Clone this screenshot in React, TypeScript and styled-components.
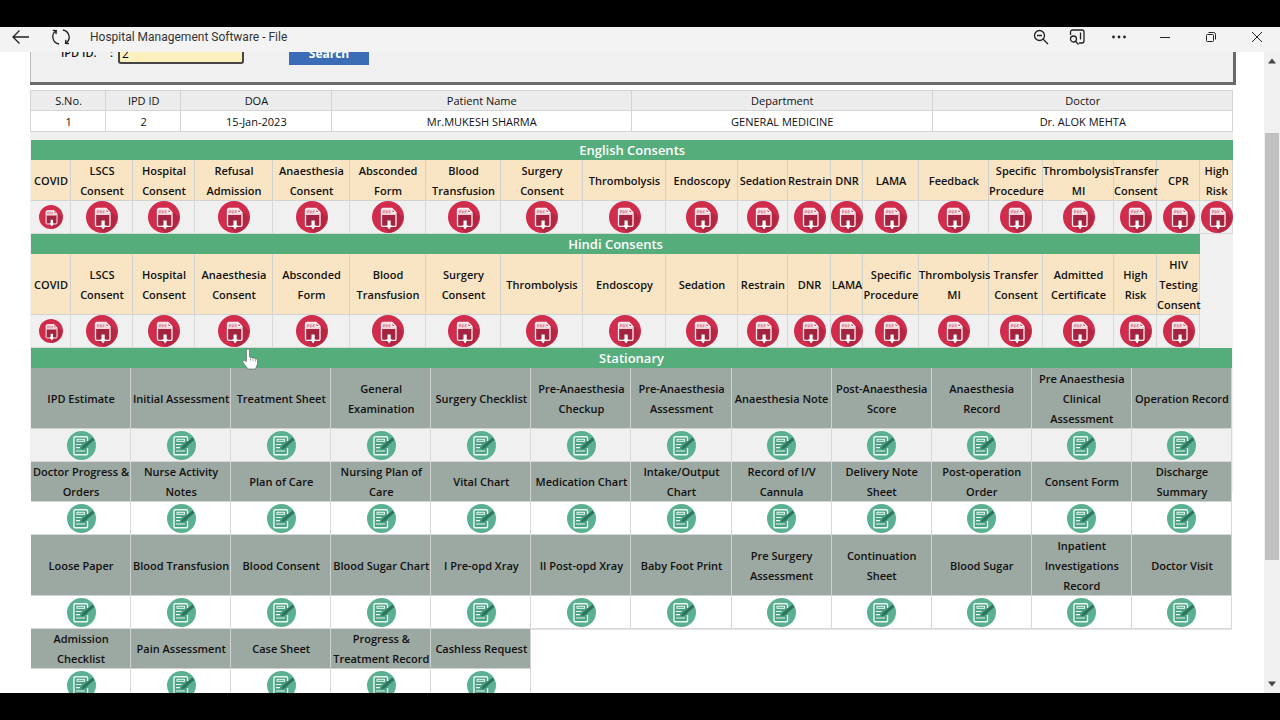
import React from "react";
import styled, { createGlobalStyle, css } from "styled-components";

const Global = createGlobalStyle`
  * { box-sizing: border-box; }
  html, body { margin: 0; background: #000; }
  body { font-family: "Open Sans", "Liberation Sans", sans-serif; color: #111; }
`;

const Screen = styled.div`
  display: flex;
  flex-direction: column;
  height: 100vh;
  padding: 27px 0;
  background: #000;
`;

const TitleBar = styled.header`
  display: flex;
  align-items: center;
  justify-content: space-between;
  flex: none;
  height: 25px;
  padding: 0 15px 6px 10px;
  background: #f3f3f3;
`;

const TitleGroup = styled.div<{ $gap: number }>`
  display: flex;
  align-items: center;
  gap: ${(p) => p.$gap}px;
`;

const WindowTitle = styled.h1`
  margin: 0;
  font: 400 12px/16px Roboto, sans-serif;
  color: #333;
`;

const IconButton = styled.button`
  display: flex;
  padding: 0;
  border: 0;
  background: none;
  color: #222;
`;

const Body = styled.div`
  display: flex;
  flex: 1;
  min-height: 0;
  overflow: hidden;
  background: #fff;
`;

const Page = styled.main`
  flex: 1;
  min-width: 0;
  padding: 0 31px 0 30px;
`;

const Scrolled = styled.div`
  margin-top: -24px;
`;

const SearchPanel = styled.form`
  display: flex;
  align-items: flex-start;
  height: 57px;
  margin-right: -3px;
  padding: 15px 0 0 31px;
  background: #f0f0f0;
  border: solid #6a6a6a;
  border-width: 0 3px 3px 0;
  box-shadow: inset 1px 0 0 #bbb;
`;

const FieldLabel = styled.label`
  display: flex;
  justify-content: space-between;
  width: 52px;
  margin-right: 5px;
  font-size: 11px;
  font-weight: 600;
  line-height: 20px;
`;

const TextBox = styled.input`
  width: 126px;
  height: 21px;
  margin-right: 45px;
  padding: 0 2px;
  border: 2px solid #444;
  border-radius: 3px;
  background: #fdf0bf;
  font: 12px "Open Sans", sans-serif;
`;

const SearchButton = styled.button`
  width: 80px;
  height: 22px;
  padding: 0;
  border: 0;
  background: #3a6db5;
  color: #fff;
  font: 700 12px/20px "Open Sans", sans-serif;
`;

const Records = styled.div`
  margin-top: 5px;
`;

const InfoTable = styled.table`
  width: 100%;
  table-layout: fixed;
  border-collapse: separate;
  border-spacing: 0;
  border: 1px solid #d4d4d4;
  border-width: 1px 0 0 1px;
  font-size: 11px;
  line-height: 20px;
  text-align: center;
`;

const infoCell = css`
  padding: 0;
  box-shadow: inset -1px -1px 0 #d4d4d4;
`;

const InfoHead = styled.th`
  ${infoCell}
  height: 20px;
  background: #ececec;
  font-weight: 400;
`;

const InfoCell = styled.td`
  ${infoCell}
  height: 21px;
  background: #fff;
`;

const Sections = styled.div`
  padding: 8px 1px 0;
  background: linear-gradient(#f0f0f0, #f0f0f0) no-repeat 0 0 / 100% 360px;
`;

const GridTable = styled.table`
  width: 100%;
  table-layout: fixed;
  border-collapse: separate;
  border-spacing: 0;
  font-size: 11px;
  line-height: 20px;
  text-align: center;
`;

const Banner = styled.th`
  height: 20px;
  padding: 0;
  background: #56ad7c;
  color: #fff;
  font-size: 13px;
  font-weight: 600;
`;

const LabelCell = styled.th<{ $tone: string; $height: number }>`
  height: ${(p) => p.$height}px;
  padding: 0;
  background: ${(p) => p.$tone};
  box-shadow: inset -1px -1px 0 #d0d3cf;
  font-weight: 600;
`;

const IconCell = styled.td<{ $tone: string }>`
  height: 33px;
  padding: 0 0 1px;
  background: ${(p) => p.$tone};
  box-shadow: inset -1px -1px 0 #d8d8d8;
  vertical-align: middle;
`;

const BlankCell = styled.td<{ $tone: string; $line?: boolean }>`
  padding: 0;
  background: ${(p) => p.$tone};
  ${(p) => p.$line && "box-shadow: inset 0 1px 0 #e4e4e4;"}
`;

const FileLink = styled.a`
  display: flex;
  justify-content: center;
`;

const ScrollBar = styled.div`
  display: flex;
  flex-direction: column;
  align-items: center;
  flex: none;
  width: 16px;
  padding: 6px 1px;
  background: #f0f0f0;
`;

const Track = styled.div`
  flex: 1;
  width: 14px;
  margin: 4px 0;
  padding: 65px 0 117px;
`;

const Thumb = styled.div`
  height: 100%;
  background: #c1c1c1;
`;

const Pointer = styled.svg`
  position: absolute;
  left: 242px;
  top: 348px;
`;

function PdfIcon({ size = 32 }: { size?: number }) {
  return (
    <svg width={size} height={size} viewBox="0 0 32 32" aria-hidden="true">
      <circle cx="16" cy="16" r="16" fill="#d02c4c" />
      <path d="M24 9.500L30.800 16A16 16 0 0 1 18 31.800L10 24.500Z" fill="#b42743" />
      <rect x="9.500" y="14" width="14" height="10.500" fill="#a32440" />
      <path d="M10.500 7.500H20l3.500 3.500v3H9.500V8.500Z" fill="#f4d5db" />
      <path d="M20 7v4.500h4" fill="#d02c4c" stroke="#fff" strokeWidth="1" />
      <path d="M9.500 9a1.500 1.500 0 0 1 1.500-1.500h9l4 4v12.500a1.300 1.300 0 0 1-1.300 1.300H10.800A1.300 1.300 0 0 1 9.500 24Z" fill="none" stroke="#fceef0" strokeWidth="1.300" />
      <path d="M11.500 12.200V9.800h1.500v1.200h-1.500M14.300 9.800v2.200h.8l.7-.6v-1l-.7-.6ZM17.200 12.200V9.800h1.500M17.200 11h1.200" stroke="#c9687b" strokeWidth=".6" fill="none" />
      <path d="M15.500 19.500h3.200v5h1.300L17.100 28.500l-2.900-4h1.300Z" fill="#fff" />
    </svg>
  );
}

function NoteIcon() {
  return (
    <svg width="29" height="29" viewBox="0 0 29 29" aria-hidden="true">
      <circle cx="14.500" cy="14.500" r="14.500" fill="#5bb091" />
      <path d="M20.500 10V7A1.300 1.300 0 0 0 19.200 5.700H8.300A1.300 1.300 0 0 0 7 7v15.500a1.300 1.300 0 0 0 1.300 1.300h10.900a1.300 1.300 0 0 0 1.300-1.300V17" fill="#4aa183" stroke="#e9fbf3" strokeWidth="1.400" />
      <rect x="10" y="8.300" width="7.500" height="2" fill="none" stroke="#e9fbf3" strokeWidth="1" />
      <path d="M9 13.500h5.500M9 16.700h4M9 20h9" stroke="#e9fbf3" strokeWidth="1.200" />
      <path d="M25.500 6.500L15.500 15l-1.500 3.500 3.700-1.200L27.300 9Z" fill="#2f735e" />
    </svg>
  );
}

const columns = [40, 62, 62, 78, 77, 76, 75, 82, 83, 72, 50, 43, 32, 56, 70, 54, 71, 43, 43, 33];

const english = ["COVID", "LSCS Consent", "Hospital Consent", "Refusal Admission", "Anaesthesia Consent", "Absconded Form", "Blood Transfusion", "Surgery Consent", "Thrombolysis", "Endoscopy", "Sedation", "Restrain", "DNR", "LAMA", "Feedback", "Specific Procedure", "Thrombolysis MI", "Transfer Consent", "CPR", "High Risk"];

const hindi = ["COVID", "LSCS Consent", "Hospital Consent", "Anaesthesia Consent", "Absconded Form", "Blood Transfusion", "Surgery Consent", "Thrombolysis", "Endoscopy", "Sedation", "Restrain", "DNR", "LAMA", "Specific Procedure", "Thrombolysis MI", "Transfer Consent", "Admitted Certificate", "High Risk", "HIV Testing Consent"];

const stationary = [
  { height: 61, tone: "#f0f0f0", items: ["IPD Estimate", "Initial Assessment", "Treatment Sheet", "General Examination", "Surgery Checklist", "Pre-Anaesthesia Checkup", "Pre-Anaesthesia Assessment", "Anaesthesia Note", "Post-Anaesthesia Score", "Anaesthesia Record", "Pre Anaesthesia Clinical Assessment", "Operation Record"] },
  { height: 40, tone: "#fff", items: ["Doctor Progress & Orders", "Nurse Activity Notes", "Plan of Care", "Nursing Plan of Care", "Vital Chart", "Medication Chart", "Intake/Output Chart", "Record of I/V Cannula", "Delivery Note Sheet", "Post-operation Order", "Consent Form", "Discharge Summary"] },
  { height: 61, tone: "#fff", items: ["Loose Paper", "Blood Transfusion", "Blood Consent", "Blood Sugar Chart", "I Pre-opd Xray", "II Post-opd Xray", "Baby Foot Print", "Pre Surgery Assessment", "Continuation Sheet", "Blood Sugar", "Inpatient Investigations Record", "Doctor Visit"] },
  { height: 40, tone: "#fff", items: ["Admission Checklist", "Pain Assessment", "Case Sheet", "Progress & Treatment Record", "Cashless Request"] },
];

// Consent labels break after every word, so each word sits on its own line.
function Stacked({ text }: { text: string }) {
  return (
    <>
      {text.split(" ").map((word, i) => (
        <React.Fragment key={i}>
          {i > 0 && <br />}
          {word}
        </React.Fragment>
      ))}
    </>
  );
}

function ConsentTable({ title, items, height }: { title: string; items: string[]; height: number }) {
  const rest = columns.length - items.length;
  return (
    <GridTable>
      <colgroup>{columns.map((w, i) => <col key={i} width={w} />)}</colgroup>
      <tbody>
        <tr>
          <Banner colSpan={items.length} scope="colgroup">{title}</Banner>
          {rest > 0 && <BlankCell $tone="#f0f0f0" rowSpan={3} />}
        </tr>
        <tr>
          {items.map((t) => (
            <LabelCell key={t} $tone="#f9e5c4" $height={height} scope="col"><Stacked text={t} /></LabelCell>
          ))}
        </tr>
        <tr>
          {items.map((t, i) => (
            <IconCell key={t} $tone="#f0f0f0">
              <FileLink href="#" aria-label={t}><PdfIcon size={i === 0 ? 24 : 32} /></FileLink>
            </IconCell>
          ))}
        </tr>
      </tbody>
    </GridTable>
  );
}

function StationaryTable() {
  return (
    <GridTable>
      <tbody>
        <tr><Banner colSpan={12} scope="colgroup">Stationary</Banner></tr>
        {stationary.map((row, r) => {
          const rest = 12 - row.items.length;
          return (
            <React.Fragment key={r}>
              <tr>
                {row.items.map((t) => (
                  <LabelCell key={t} $tone="#9ca8a2" $height={row.height} scope="col">{t}</LabelCell>
                ))}
                {rest > 0 && <BlankCell $tone="#fff" $line colSpan={rest} rowSpan={2} />}
              </tr>
              <tr>
                {row.items.map((t) => (
                  <IconCell key={t} $tone={row.tone}>
                    <FileLink href="#" aria-label={t}><NoteIcon /></FileLink>
                  </IconCell>
                ))}
              </tr>
            </React.Fragment>
          );
        })}
      </tbody>
    </GridTable>
  );
}

const stroke = { fill: "none", stroke: "currentColor", strokeWidth: 1.3 } as const;

export default function App() {
  return (
    <Screen>
      <Global />
      <TitleBar>
        <TitleGroup $gap={20}>
          <IconButton aria-label="Back">
            <svg width="20" height="18" viewBox="0 0 20 18" {...stroke}><path d="M9.500 2.500L3 9l6.500 6.500M3 9h16" /></svg>
          </IconButton>
          <IconButton aria-label="Reload">
            <svg width="20" height="18" viewBox="0 0 20 18" {...stroke}><path d="M9 16A7.300 7.300 0 0 1 6 2.800M13 2A7.300 7.300 0 0 1 16 15.200M2.800 2.300l3.500.3-.3 3.500M19 15.700l-3.500-.3.300-3.500" /></svg>
          </IconButton>
          <WindowTitle>Hospital Management Software - File</WindowTitle>
        </TitleGroup>
        <TitleGroup $gap={26}>
          <TitleGroup $gap={20}>
            <IconButton aria-label="Zoom out">
              <svg width="16" height="16" viewBox="0 0 16 16" {...stroke}><circle cx="6.500" cy="6.500" r="5" /><path d="M4 6.500h5M10.200 10.200L15 15" /></svg>
            </IconButton>
            <IconButton aria-label="Find">
              <svg width="16" height="16" viewBox="0 0 16 16" {...stroke}><path d="M1.500 6V3a2 2 0 0 1 2-2h9.500a2 2 0 0 1 2 2v9a2 2 0 0 1-2 2h-3M11.500 3.500v7" /><circle cx="4.500" cy="10" r="3" /><path d="M6.800 12.300L9.500 15.500" /></svg>
            </IconButton>
          </TitleGroup>
          <TitleGroup $gap={30}>
            <IconButton aria-label="More">
              <svg width="16" height="16" viewBox="0 0 16 16" fill="currentColor"><circle cx="2.500" cy="8" r="1.400" /><circle cx="8" cy="8" r="1.400" /><circle cx="13.500" cy="8" r="1.400" /></svg>
            </IconButton>
            <IconButton aria-label="Minimize">
              <svg width="16" height="16" viewBox="0 0 16 16" {...stroke} strokeWidth="1"><path d="M3 8.500h10" /></svg>
            </IconButton>
            <IconButton aria-label="Restore">
              <svg width="16" height="16" viewBox="0 0 16 16" {...stroke} strokeWidth="1"><rect x="3.500" y="5.500" width="7" height="7" rx="1" /><path d="M5.500 3.500h5a2 2 0 0 1 2 2v5" /></svg>
            </IconButton>
            <IconButton aria-label="Close">
              <svg width="16" height="16" viewBox="0 0 16 16" {...stroke} strokeWidth="1"><path d="M3 3l10 10M13 3L3 13" /></svg>
            </IconButton>
          </TitleGroup>
        </TitleGroup>
      </TitleBar>
      <Body>
        <Page>
          <Scrolled>
            <SearchPanel>
              <FieldLabel htmlFor="ipd"><span>IPD ID.</span><span>:</span></FieldLabel>
              <TextBox id="ipd" defaultValue="2" />
              <SearchButton type="button">Search</SearchButton>
            </SearchPanel>
            <Records>
              <InfoTable>
                <colgroup>{[1, 1, 2, 4, 4, 4].map((n, i) => <col key={i} width={`${n * 6.25}%`} />)}</colgroup>
                <thead>
                  <tr>{["S.No.", "IPD ID", "DOA", "Patient Name", "Department", "Doctor"].map((t) => <InfoHead key={t}>{t}</InfoHead>)}</tr>
                </thead>
                <tbody>
                  <tr>{["1", "2", "15-Jan-2023", "Mr.MUKESH SHARMA", "GENERAL MEDICINE", "Dr. ALOK MEHTA"].map((t) => <InfoCell key={t}>{t}</InfoCell>)}</tr>
                </tbody>
              </InfoTable>
              <Sections>
                <ConsentTable title="English Consents" items={english} height={41} />
                <ConsentTable title="Hindi Consents" items={hindi} height={61} />
                <StationaryTable />
              </Sections>
            </Records>
          </Scrolled>
        </Page>
        <ScrollBar>
          <svg width="8" height="6" viewBox="0 0 8 6"><path d="M0 5.500L4 .5l4 5Z" fill="#444" /></svg>
          <Track><Thumb /></Track>
          <svg width="8" height="6" viewBox="0 0 8 6"><path d="M0 .5l4 5 4-5Z" fill="#444" /></svg>
        </ScrollBar>
      </Body>
      <Pointer width="18" height="23" viewBox="0 0 18 23" aria-hidden="true">
        <path d="M4.500 2.500a1.500 1.500 0 0 1 3 0V9l6.500 1.500a2 2 0 0 1 1.500 2V16l-2 5H6L1 14.500a1.500 1.500 0 0 1 2-2l1.500 1Z" fill="#fff" stroke="#666" strokeWidth=".7" />
        <path d="M8.500 9.500v3M11 10v3M13.500 10.500v3" stroke="#888" strokeWidth=".7" />
      </Pointer>
    </Screen>
  );
}
